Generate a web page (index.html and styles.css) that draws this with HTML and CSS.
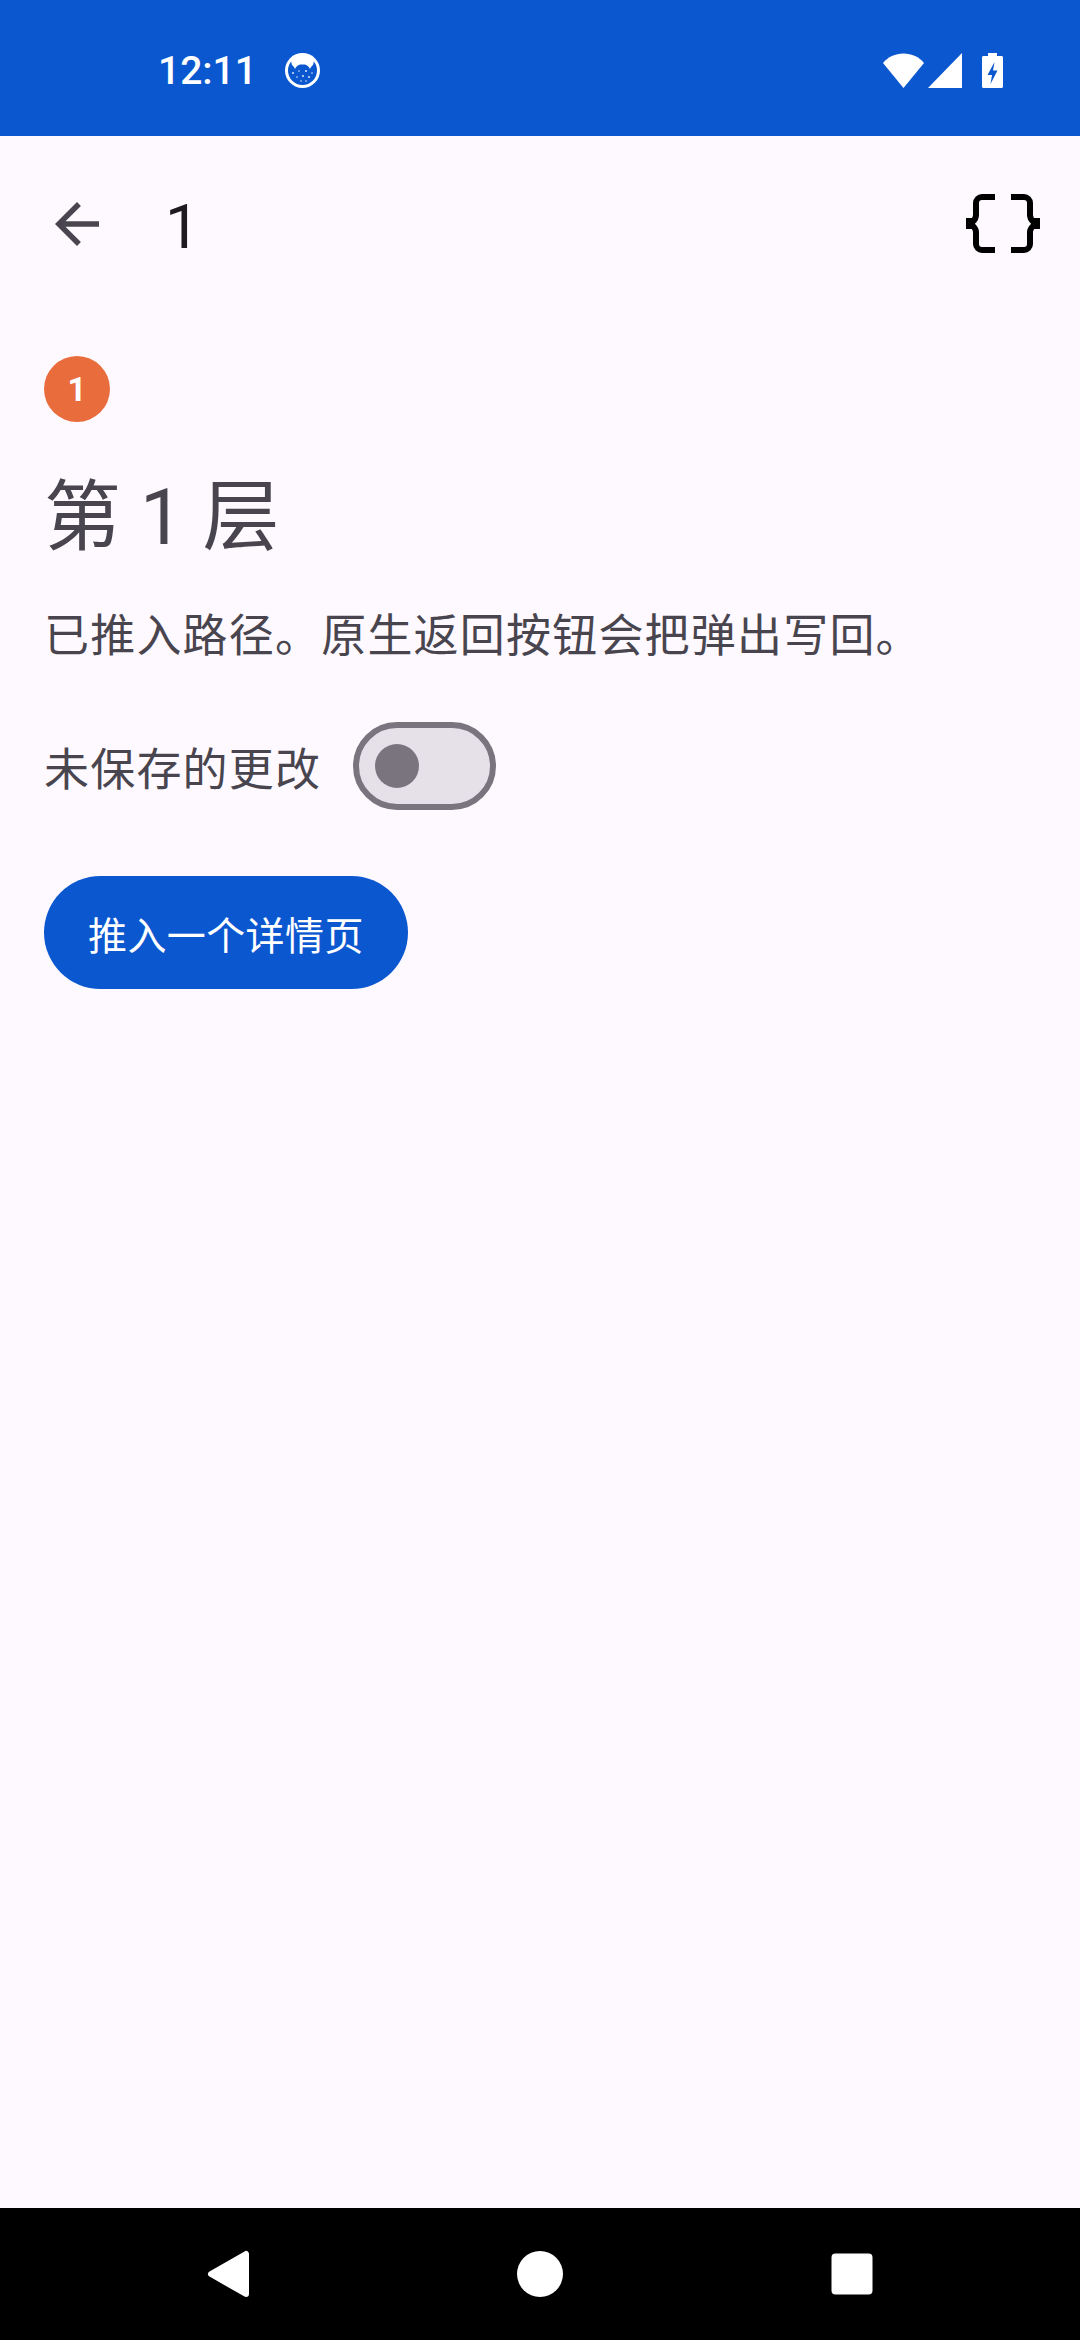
FILE: index.html

```html
<!DOCTYPE html>
<html lang="zh-CN">
<head>
  <meta charset="UTF-8" />
  <meta name="viewport" content="width=device-width, initial-scale=1.0"/>
  <title>第 1 层</title>
  <link rel="stylesheet" href="styles.css">
</head>
<body>

<div class="phone">
  <div class="status-bar">
    <span class="clock">12:11</span>
    <svg class="notif-icon" viewBox="0 0 35 35">
      <circle cx="17.5" cy="17.5" r="17.5" fill="#fff"/>
      <circle cx="17.5" cy="17.5" r="14.5" fill="#0b57d0"/>
      <path d="M8 3h19l2 5-1 4c-1 1-2.500 2-3 4-1-2-2.500-4-5-4.500h-5c-2.500 .5-4 2.500-5 4.500-.5-2-2-3-3-4L6 8z" fill="#fff"/>
      <g fill="#fff" opacity="0.85">
        <circle cx="8" cy="20" r="1"/>
        <circle cx="14" cy="18" r="0.8"/>
        <circle cx="21" cy="18" r="1"/>
        <circle cx="27" cy="20" r="0.8"/>
        <circle cx="12" cy="24" r="0.8"/>
        <circle cx="18" cy="23" r="1"/>
        <circle cx="24" cy="24" r="1"/>
        <circle cx="16" cy="28" r="0.8"/>
        <circle cx="21" cy="28" r="0.8"/>
      </g>
    </svg>
    <div class="status-right">
      <svg class="wifi" viewBox="0 0 41 35"><path d="M0 10C5 4 12 .5 20.500 .5S36 4 41 10L20.500 35z" fill="#fff"/></svg>
      <svg class="signal" viewBox="0 0 34 35"><path d="M34 0v35H0z" fill="#fff"/></svg>
      <svg class="battery" viewBox="0 0 21 35">
        <path d="M6 0h9v3h4.500c.8 0 1.500 .7 1.500 1.500V33.500c0 .8-.7 1.500-1.500 1.500H1.500C.7 35 0 34.300 0 33.500V4.500C0 3.700 .7 3 1.500 3H6z" fill="#fff"/>
        <path d="M12.500 9l-7 13h4.500l-1.500 9 7-13.500h-4.500z" fill="#0b57d0"/>
      </svg>
    </div>
  </div>

  <div class="top-bar">
    <svg class="back-icon" viewBox="0 0 24 24"><path d="M20 11H7.830l5.590-5.590L12 4l-8 8 8 8 1.410-1.410L7.830 13H20v-2z"/></svg>
    <span class="top-title">1</span>
    <svg class="data-icon" viewBox="0 0 88 88">
      <path class="brace" d="M36 17H23a6 6 0 0 0-6 6v12c0 3-1.500 5-3 6.500M14 46c1.500 1.500 3 3.500 3 6v12a6 6 0 0 0 6 6h13"/>
      <path class="brace" d="M52 17H65a6 6 0 0 1 6 6v12c0 3 1.500 5 3 6.500M74 46c-1.500 1.500-3 3.500-3 6v12a6 6 0 0 1-6 6H52"/>
      <path d="M7 38h9v11H7zM72 38h9v11h-9z"/>
    </svg>
  </div>

  <div class="content">
    <div class="badge">1</div>
    <h1 class="heading">第 1 层</h1>
    <p class="desc">已推入路径。原生返回按钮会把弹出写回。</p>
    <div class="toggle-row">
      <span class="toggle-label">未保存的更改</span>
      <div class="toggle"><span class="thumb"></span></div>
    </div>
    <button class="push-btn">推入一个详情页</button>
  </div>

  <div class="nav-bar">
    <svg class="nav-icon" viewBox="0 0 66 66"><path d="M16 33L51 13V53z" fill="#fff" stroke="#fff" stroke-width="6" stroke-linejoin="round"/></svg>
    <svg class="nav-icon" viewBox="0 0 66 66"><circle cx="33" cy="33" r="23" fill="#fff"/></svg>
    <svg class="nav-icon" viewBox="0 0 66 66"><rect x="12.500" y="12.500" width="41" height="41" rx="4" fill="#fff"/></svg>
  </div>
</div>

</body>
</html>
```

FILE: styles.css

```css
* {
  box-sizing: border-box;
}
body {
  margin: 0;
  background: #fef9ff;
  font-family: Roboto, "Noto Sans CJK SC", sans-serif;
}
.phone {
  width: 1080px;
  height: 2340px;
  display: flex;
  flex-direction: column;
  overflow: hidden;
}

/* status bar */
.status-bar {
  height: 136px;
  background: #0b57d0;
  color: white;
  display: flex;
  align-items: center;
  padding: 5px 77px 0 158px;
}
.clock {
  font-size: 39px;
  font-weight: 500;
  width: 127px;
}
.notif-icon {
  width: 35px;
  height: 35px;
}
.status-right {
  margin-left: auto;
  display: flex;
  align-items: center;
}
.wifi {
  width: 41px;
  height: 35px;
  margin-right: 4px;
}
.signal {
  width: 34px;
  height: 35px;
  margin-right: 20px;
}
.battery {
  width: 21px;
  height: 35px;
}

/* top app bar */
.top-bar {
  height: 176px;
  display: flex;
  align-items: center;
  padding: 0 33px 0 44px;
}
.back-icon {
  width: 66px;
  height: 66px;
  fill: #49454f;
}
.top-title {
  font-size: 62px;
  color: #1d1b20;
  margin-left: 55px;
  padding-top: 4px;
}
.data-icon {
  width: 88px;
  height: 88px;
  margin-left: auto;
  fill: #000;
}
.brace {
  fill: none;
  stroke: #000;
  stroke-width: 6;
}

/* page content */
.content {
  flex: 1;
  padding: 44px 44px 0;
  display: flex;
  flex-direction: column;
  align-items: flex-start;
}
.badge {
  width: 66px;
  height: 66px;
  border-radius: 50%;
  background: #e96c3c;
  color: white;
  font-size: 33px;
  font-weight: 700;
  display: flex;
  align-items: center;
  justify-content: center;
}
.heading {
  margin: 47px 0 0;
  font-size: 77px;
  line-height: 99px;
  font-weight: 400;
  color: #49454f;
}
.desc {
  margin: 36px 0 0;
  font-size: 45px;
  line-height: 66px;
  letter-spacing: 1.200px;
  color: #49454f;
}
.toggle-row {
  margin-top: 52px;
  display: flex;
  align-items: center;
  gap: 32px;
}
.toggle-label {
  font-size: 45px;
  letter-spacing: 1.200px;
  color: #49454f;
}
.toggle {
  width: 143px;
  height: 88px;
  border: 6px solid #79747e;
  border-radius: 44px;
  background: #e6e0e9;
  display: flex;
  align-items: center;
  padding-left: 16px;
}
.thumb {
  width: 44px;
  height: 44px;
  border-radius: 50%;
  background: #79747e;
}
.push-btn {
  margin-top: 66px;
  height: 113px;
  padding: 0 44px;
  border: none;
  border-radius: 57px;
  background: #0b57d0;
  color: white;
  font-family: inherit;
  font-size: 39px;
  letter-spacing: .4px;
}

/* navigation bar */
.nav-bar {
  height: 132px;
  background: black;
  display: flex;
  align-items: center;
  justify-content: center;
  gap: 246px;
}
.nav-icon {
  width: 66px;
  height: 66px;
}
```
